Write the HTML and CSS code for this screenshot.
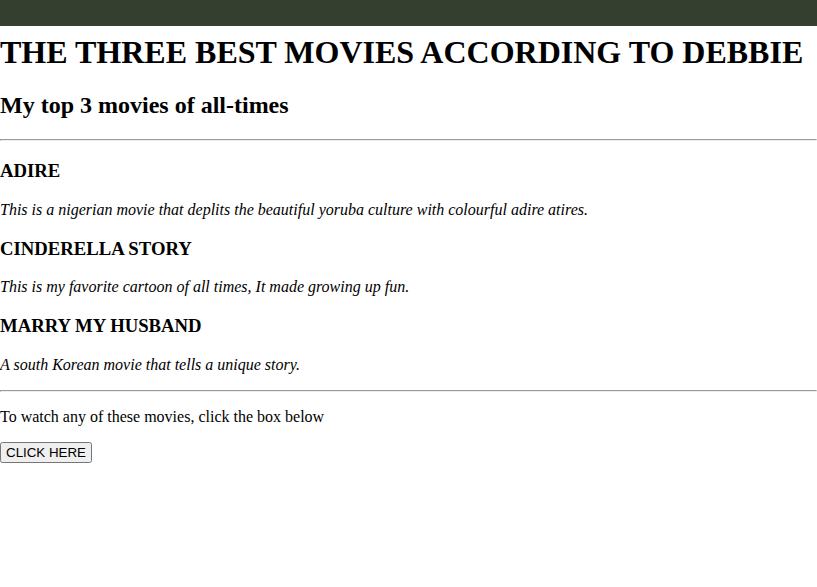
FILE: index.html
```html
<!DOCTYPE html>
<html lang="en">
<head>
<meta charset="utf-8">
<title>The Three Best Movies</title>
<link rel="stylesheet" href="styles.css">
</head>
<body>
<div class="topbar"></div>
<h1 class="title">THE THREE BEST MOVIES ACCORDING TO DEBBIE</h1>
<h2>My top 3 movies of all-times</h2>
<hr>
<h3>ADIRE</h3>
<p><em>This is a nigerian movie that deplits the beautiful yoruba culture with colourful adire atires.</em></p>
<h3>CINDERELLA STORY</h3>
<p><em>This is my favorite cartoon of all times, It made growing up fun.</em></p>
<h3>MARRY MY HUSBAND</h3>
<p><em>A south Korean movie that tells a unique story.</em></p>
<hr>
<p>To watch any of these movies, click the box below</p>
<button class="btn">CLICK HERE</button>
</body>
</html>
```
FILE: styles.css
```css
body {
  margin: 0;
  font-family: "Liberation Serif", "Times New Roman", serif;
  color: #000;
  background: #fff;
}
.topbar {
  height: 26px;
  background: #353f2f;
}
.title {
  margin-top: 8px;
}
.btn {
  font-family: "Liberation Sans", Arial, sans-serif;
  font-size: 13.333px;
  padding: 1px 4px;
}
```
